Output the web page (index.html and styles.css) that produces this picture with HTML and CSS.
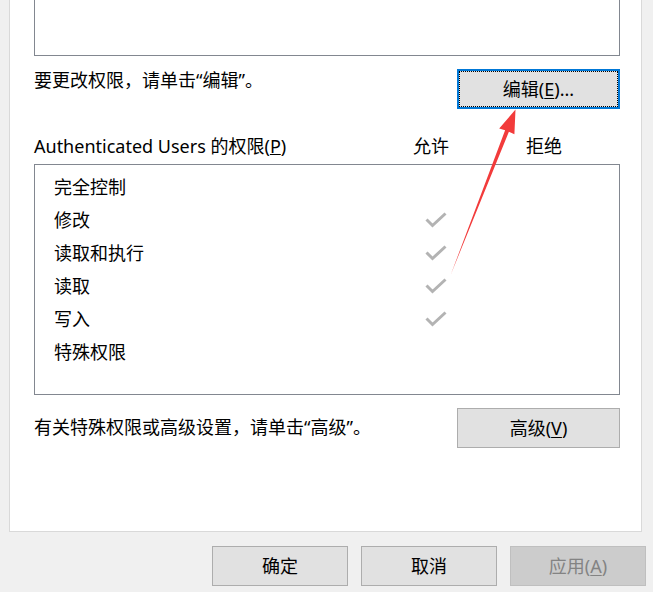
FILE: index.html
```html
<!DOCTYPE html>
<html lang="zh-CN">
<head>
<meta charset="utf-8">
<title>权限</title>
<link rel="stylesheet" href="styles.css">
</head>
<body>
<div class="page">
  <div class="panel">
    <div class="listbox top-box"></div>
    <div class="action-row first-action">
      <span class="hint">要更改权限，请单击“编辑”。</span>
      <button class="btn focused">编辑(<u>E</u>)...</button>
    </div>
    <div class="perm-header">
      <span class="perm-title">Authenticated Users 的权限(<u>P</u>)</span>
      <span class="col allow-col">允许</span>
      <span class="col deny-col">拒绝</span>
    </div>
    <div class="listbox perm-box">
      <div class="perm-row"><span class="perm-name">完全控制</span><span class="cell"></span><span class="cell"></span></div>
      <div class="perm-row"><span class="perm-name">修改</span><span class="cell"><svg class="check" viewBox="0 0 22 16" width="22" height="16"><path d="M1.5 7.5 L7.5 13.5 L20.5 1.5" fill="none" stroke="#b3b3b3" stroke-width="3"/></svg></span><span class="cell"></span></div>
      <div class="perm-row"><span class="perm-name">读取和执行</span><span class="cell"><svg class="check" viewBox="0 0 22 16" width="22" height="16"><path d="M1.5 7.5 L7.5 13.5 L20.5 1.5" fill="none" stroke="#b3b3b3" stroke-width="3"/></svg></span><span class="cell"></span></div>
      <div class="perm-row"><span class="perm-name">读取</span><span class="cell"><svg class="check" viewBox="0 0 22 16" width="22" height="16"><path d="M1.5 7.5 L7.5 13.5 L20.5 1.5" fill="none" stroke="#b3b3b3" stroke-width="3"/></svg></span><span class="cell"></span></div>
      <div class="perm-row"><span class="perm-name">写入</span><span class="cell"><svg class="check" viewBox="0 0 22 16" width="22" height="16"><path d="M1.5 7.5 L7.5 13.5 L20.5 1.5" fill="none" stroke="#b3b3b3" stroke-width="3"/></svg></span><span class="cell"></span></div>
      <div class="perm-row"><span class="perm-name">特殊权限</span><span class="cell"></span><span class="cell"></span></div>
    </div>
    <div class="action-row second-action">
      <span class="hint">有关特殊权限或高级设置，请单击“高级”。</span>
      <button class="btn">高级(<u>V</u>)</button>
    </div>
  </div>
  <div class="footer">
    <button class="btn footer-btn">确定</button>
    <button class="btn footer-btn">取消</button>
    <button class="btn footer-btn disabled">应用(<u>A</u>)</button>
  </div>
  <svg class="arrow" width="653" height="592" viewBox="0 0 653 592">
    <polygon points="451,274 508.9,131.8 514.4,134.3 515.5,109.5 499.2,128.4 505.1,130.2" fill="#f23b3b"/>
  </svg>
</div>
</body>
</html>
```

FILE: styles.css
```css
* { box-sizing: border-box; }
html, body {
  margin: 0;
  padding: 0;
  background: #f0f0f0;
}
body {
  font-family: "Noto Sans", "Noto Sans CJK SC", sans-serif;
  font-size: 18px;
  color: #000;
  width: 653px;
  height: 592px;
  overflow: hidden;
}
.page {
  position: relative;
  width: 653px;
  height: 592px;
}
.panel {
  margin-left: 9px;
  width: 633px;
  height: 532px;
  background: #fff;
  border: 1px solid #d9d9d9;
  border-top: none;
  padding: 0 21px 0 24px;
}
.listbox {
  width: 586px;
  border: 1px solid #828790;
  background: #fff;
}
.top-box {
  height: 56px;
  border-top: none;
}
.action-row {
  display: flex;
  align-items: center;
  justify-content: space-between;
  height: 40px;
}
.first-action { margin-top: 13px; }
.second-action { margin-top: 13px; }
.hint {
  line-height: 20px;
  margin-top: -2px;
}
.first-action .hint { margin-top: -18px; }
.btn {
  font-family: "Noto Sans", "Noto Sans CJK SC", sans-serif;
  font-size: 18px;
  color: #000;
  width: 163px;
  height: 40px;
  background: #e1e1e1;
  border: 1px solid #adadad;
  padding: 0;
  margin: 0;
  line-height: 20px;
}
.btn u { text-decoration-thickness: 1px; text-underline-offset: 2px; }
.focused {
  border: 2px solid #0078d7;
  outline: 1px dotted #000;
  outline-offset: -3px;
  height: 40px;
}
.perm-header {
  display: flex;
  align-items: center;
  height: 20px;
  line-height: 20px;
  margin-top: 27px;
}
.perm-title { flex: 1; }
.col {
  width: 60px;
  text-align: center;
}
.deny-col { margin-left: 53px; margin-right: 46px; }
.perm-box {
  margin-top: 8px;
  height: 231px;
  padding: 5px 0 0 19px;
}
.perm-row {
  display: flex;
  align-items: center;
  height: 33px;
  line-height: 20px;
}
.perm-name { flex: 1; }
.cell {
  width: 60px;
  display: flex;
  justify-content: center;
  align-items: center;
}
.cell:last-child { width: 0; margin-right: 153px; }
.check { display: block; }
.footer {
  display: flex;
  justify-content: flex-end;
  gap: 13px;
  padding-right: 7px;
  margin-top: 14px;
}
.footer-btn { width: 136px; }
.disabled {
  background: #cccccc;
  border-color: #bfbfbf;
  color: #838383;
}
.arrow {
  position: absolute;
  left: 0;
  top: 0;
  pointer-events: none;
}
```
